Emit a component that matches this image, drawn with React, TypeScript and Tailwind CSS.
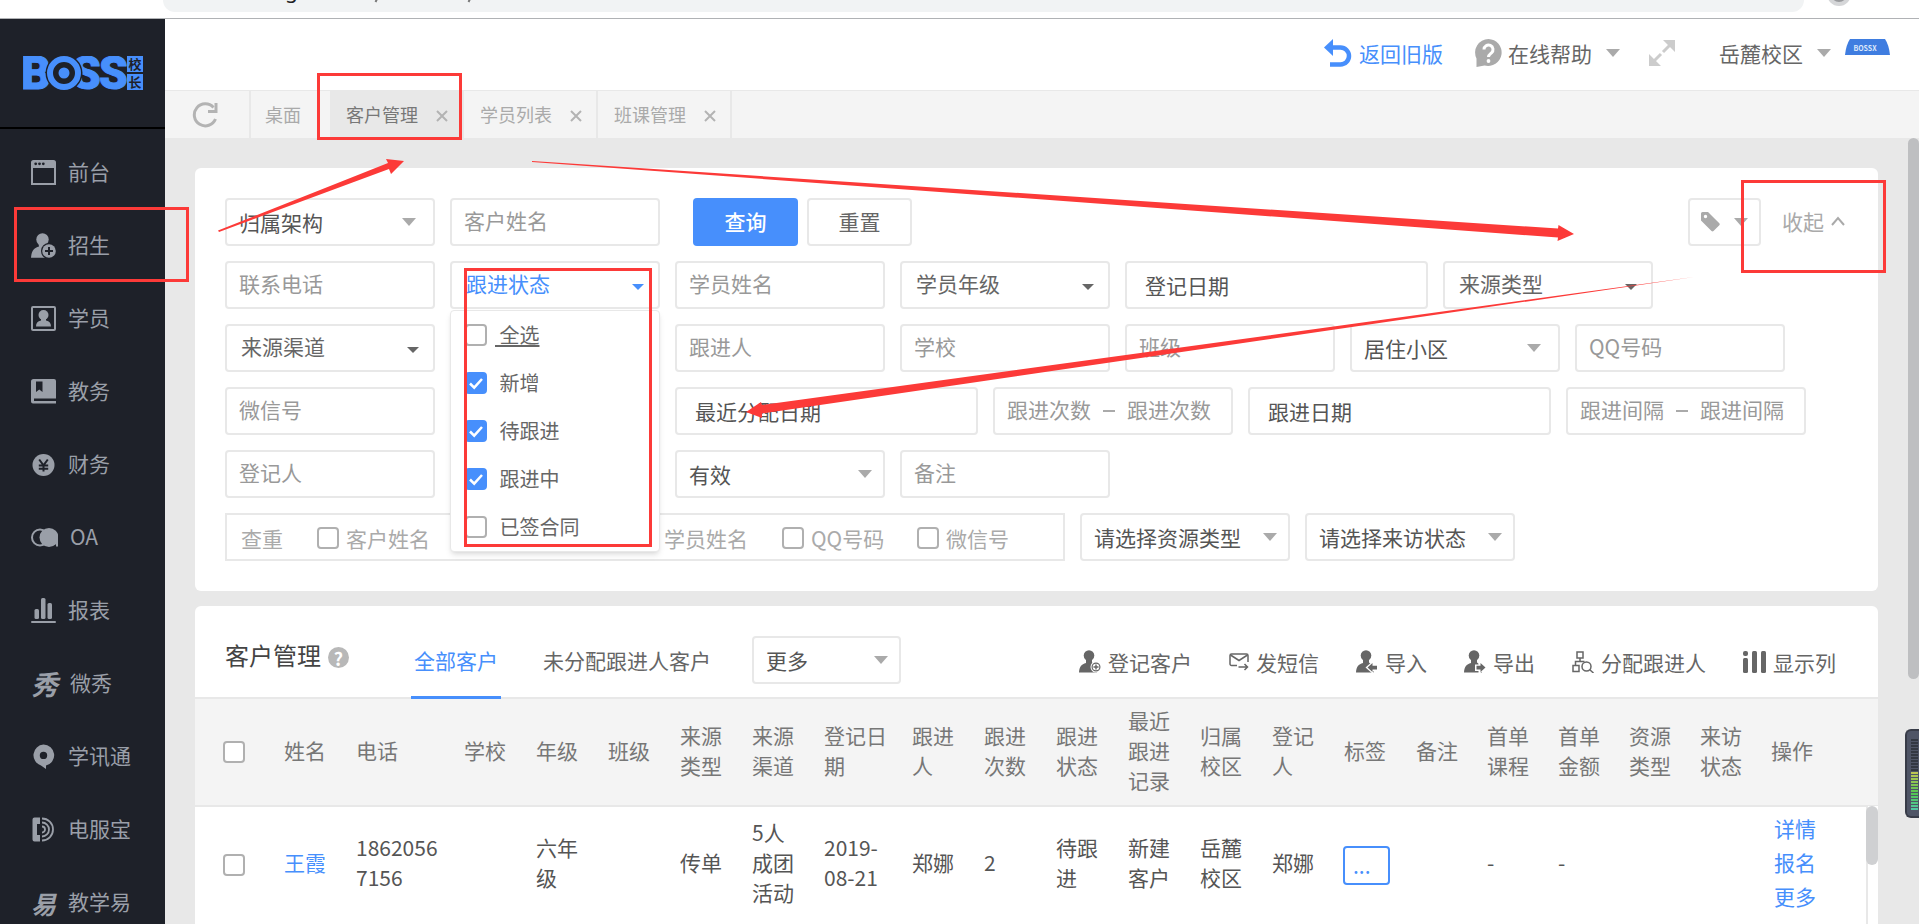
import { useState, type ReactNode } from "react";

// ---------------------------------------------------------------------------
// Data
// ---------------------------------------------------------------------------

type TabItem = { label: string; closable: boolean };

const TABS: TabItem[] = [
  { label: "桌面", closable: false },
  { label: "客户管理", closable: true },
  { label: "学员列表", closable: true },
  { label: "班课管理", closable: true },
];

const FOLLOW_STATES = ["全选", "新增", "待跟进", "跟进中", "已签合同"];

// Column title + width. The last column takes whatever is left.
const COLUMNS: { title: string; width: string }[] = [
  { title: "姓名", width: "w-[72px]" },
  { title: "电话", width: "w-[108px]" },
  { title: "学校", width: "w-[72px]" },
  { title: "年级", width: "w-[72px]" },
  { title: "班级", width: "w-[72px]" },
  { title: "来源类型", width: "w-[72px]" },
  { title: "来源渠道", width: "w-[72px]" },
  { title: "登记日期", width: "w-[88px]" },
  { title: "跟进人", width: "w-[72px]" },
  { title: "跟进次数", width: "w-[72px]" },
  { title: "跟进状态", width: "w-[72px]" },
  { title: "最近跟进记录", width: "w-[72px]" },
  { title: "归属校区", width: "w-[72px]" },
  { title: "登记人", width: "w-[72px]" },
  { title: "标签", width: "w-[72px]" },
  { title: "备注", width: "w-[71px]" },
  { title: "首单课程", width: "w-[71px]" },
  { title: "首单金额", width: "w-[71px]" },
  { title: "资源类型", width: "w-[71px]" },
  { title: "来访状态", width: "w-[71px]" },
  { title: "操作", width: "" },
];

// ---------------------------------------------------------------------------
// Sidebar
// ---------------------------------------------------------------------------

function NavIcon({ children, wide }: { children: ReactNode; wide?: boolean }) {
  return (
    <svg
      viewBox={wide ? "0 0 27 25" : "0 0 25 25"}
      className={wide ? "h-[25px] w-[27px] shrink-0" : "h-[25px] w-[25px] shrink-0"}
      fill="currentColor"
      aria-hidden="true"
    >
      {children}
    </svg>
  );
}

const NAV: { label: string; icon: ReactNode }[] = [
  {
    label: "前台",
    icon: (
      <NavIcon>
        <path
          fillRule="evenodd"
          d="M2.500 0h20a2.500 2.500 0 0 1 2.500 2.500V25H0V2.500A2.500 2.500 0 0 1 2.500 0zM2 8v15h21V8z"
        />
        <circle cx="4.700" cy="3.800" r="1.400" fill="#1e2129" />
        <circle cx="8.500" cy="3.800" r="1.400" fill="#1e2129" />
        <circle cx="12.300" cy="3.800" r="1.400" fill="#1e2129" />
      </NavIcon>
    ),
  },
  {
    label: "招生",
    icon: (
      <NavIcon>
        <circle cx="11.500" cy="6.500" r="6.200" />
        <path d="M7.500 10.500h8L15 14l3 10.800H0C.5 18 3 14.800 8 13.500z" />
        <circle cx="18" cy="18" r="8" fill="#1e2129" />
        <circle cx="18" cy="18" r="6.800" />
        <path d="M18 14v8M14 18h8" stroke="#1e2129" strokeWidth="2" />
      </NavIcon>
    ),
  },
  {
    label: "学员",
    icon: (
      <NavIcon>
        <rect x="1" y="1" width="23" height="23" rx="1" fill="none" stroke="currentColor" strokeWidth="2" />
        <circle cx="12.500" cy="9" r="5" />
        <path d="M10 12h5v2.500c3.500.8 5 2.500 5 6H5c0-3.500 1.500-5.200 5-6z" />
      </NavIcon>
    ),
  },
  {
    label: "教务",
    icon: (
      <NavIcon>
        <path d="M2.500 0H23a2 2 0 0 1 2 2v17.500H3V22h22v2.500H2A2 2 0 0 1 0 22.500v-20A2.500 2.500 0 0 1 2.500 0z" />
        <path d="M5 2.500h6.500V13l-3.200-2.600L5 13z" fill="#1e2129" />
      </NavIcon>
    ),
  },
  {
    label: "财务",
    icon: (
      <NavIcon>
        <circle cx="12.500" cy="13" r="11" />
        <path
          d="M8.200 7.500l4.300 5.800 4.300-5.800M12.500 13v6.500M7.800 13.600h9.400M7.800 16.700h9.400"
          fill="none"
          stroke="#1e2129"
          strokeWidth="2"
        />
      </NavIcon>
    ),
  },
  {
    label: "OA",
    icon: (
      <NavIcon wide>
        <circle cx="9" cy="12.500" r="8" fill="none" stroke="currentColor" strokeWidth="2" />
        <circle cx="18" cy="12.500" r="9.500" />
        <path d="M25 12h2.500v9.500H25z" />
      </NavIcon>
    ),
  },
  {
    label: "报表",
    icon: (
      <NavIcon>
        <rect x="3.500" y="11" width="4.500" height="10" rx="1.500" />
        <rect x="10" y="0" width="4.500" height="21" rx="1.500" />
        <rect x="16.500" y="5" width="4.500" height="16" rx="1.500" />
        <rect x="0" y="23" width="25" height="2" rx="1" />
      </NavIcon>
    ),
  },
  {
    label: "微秀",
    icon: (
      <span className="w-[27px] shrink-0 text-[27px] leading-6 font-bold italic" aria-hidden="true">
        秀
      </span>
    ),
  },
  {
    label: "学讯通",
    icon: (
      <NavIcon>
        <path
          fillRule="evenodd"
          d="M12.500.5a10.700 10.700 0 0 1 2.500 21.100V25l-5-3.600A10.700 10.700 0 0 1 12.500.5zm0 7.200a3.700 3.700 0 1 0 0 7.400 3.700 3.700 0 0 0 0-7.400z"
        />
      </NavIcon>
    ),
  },
  {
    label: "电服宝",
    icon: (
      <NavIcon>
        <path d="M3.500 0.500H9V7H6v11h3v6.500H3.500a2 2 0 0 1-2-2v-20a2 2 0 0 1 2-2z" />
        <g fill="none" stroke="currentColor" strokeWidth="1.800">
          <path d="M11 1.500a11 11 0 0 1 0 22" />
          <path d="M11 5.500a7 7 0 0 1 0 14" />
          <path d="M11 9.500a3 3 0 0 1 0 6" />
        </g>
      </NavIcon>
    ),
  },
  {
    label: "教学易",
    icon: (
      <span className="w-[25px] shrink-0 text-[25px] leading-6 font-bold italic" aria-hidden="true">
        易
      </span>
    ),
  },
];

function Logo() {
  return (
    <svg viewBox="0 0 120 34" className="h-[34px] w-[120px]" fill="#478ffc" role="img" aria-label="BOSS校长">
      <g fontFamily="Roboto, sans-serif" fontWeight="900" fontSize="46" stroke="#478ffc" strokeWidth="1">
        <text x="-2" y="33">B</text>
        <text x="49" y="33">S</text>
        <text x="76" y="33">S</text>
      </g>
      <circle cx="41" cy="17" r="18.500" fill="#1e2129" />
      <circle cx="41" cy="17" r="14" fill="none" stroke="#478ffc" strokeWidth="6" />
      <circle cx="41" cy="17" r="5.500" />
      <rect x="104" y="0" width="16" height="16" />
      <rect x="104" y="18" width="16" height="16" />
      <g fontSize="13" fontWeight="700" fill="#1e2129" textAnchor="middle">
        <text x="112" y="13">校</text>
        <text x="112" y="31">长</text>
      </g>
    </svg>
  );
}

function Sidebar() {
  return (
    <aside className="w-[165px] shrink-0 overflow-hidden bg-[#1e2129] text-[#9a9fa8]">
      <div className="flex h-[110px] items-center border-b-2 border-black pl-[23px]">
        <Logo />
      </div>
      <nav className="pt-[7px]">
        {NAV.map((item) => (
          <a key={item.label} href="#" className="flex h-[73px] items-center gap-3 pl-[31px]">
            {item.icon}
            <span className="pb-1">{item.label}</span>
          </a>
        ))}
      </nav>
    </aside>
  );
}

// ---------------------------------------------------------------------------
// Small controls
// ---------------------------------------------------------------------------

function Caret({ className = "text-[#aaaaaa]", small }: { className?: string; small?: boolean }) {
  return (
    <svg
      viewBox="0 0 14 8"
      className={`${small ? "h-1.5 w-3" : "h-2 w-3.5"} shrink-0 ${className}`}
      preserveAspectRatio="none"
      fill="currentColor"
      aria-hidden="true"
    >
      <path d="M0 0h14L7 8z" />
    </svg>
  );
}

function TextField({ label }: { label: string }) {
  return (
    <input
      type="text"
      aria-label={label}
      placeholder={label}
      className="h-12 w-[210px] rounded border-2 border-[#e8e8e8] bg-white px-3 pb-1 text-[#555555] outline-none placeholder:text-[#999999]"
    />
  );
}

function DateField({ label }: { label: string }) {
  return (
    <input
      type="text"
      aria-label={label}
      placeholder={label}
      className="h-12 w-[303px] rounded border-2 border-[#e8e8e8] bg-white px-[18px] text-[#555555] outline-none placeholder:text-[#555555]"
    />
  );
}

type SelectFieldProps = { label: string; width?: string; caret?: string };

function SelectField({ label, width = "w-[210px]", caret = "right-[13px]" }: SelectFieldProps) {
  return (
    <div className={`relative ${width}`}>
      <select
        aria-label={label}
        className="block h-12 w-full appearance-none rounded border-2 border-[#e8e8e8] bg-white px-3 text-[#555555] outline-none"
      >
        <option>{label}</option>
      </select>
      <span className={`pointer-events-none absolute inset-y-0 flex items-center ${caret}`}>
        <Caret />
      </span>
    </div>
  );
}

// Opens a multi-choice list, so it is a button and not a <select>.
function MultiField({ label, active, onClick }: { label: string; active?: boolean; onClick?: () => void }) {
  return (
    <button
      type="button"
      onClick={onClick}
      className={`flex h-12 w-[210px] items-center justify-between rounded border-2 border-[#e8e8e8] bg-white px-3.5 ${
        active ? "text-[#478ffc]" : "text-[#666666]"
      }`}
    >
      <span className="pb-1">{label}</span>
      <Caret small className={`mt-1 ${active ? "text-[#478ffc]" : "text-[#666666]"}`} />
    </button>
  );
}

function RangeField({ label }: { label: string }) {
  return (
    <div className="flex h-12 w-[240px] items-center gap-3 rounded border-2 border-[#e8e8e8] bg-white pl-3 text-[#999999]">
      <input
        type="text"
        aria-label={`${label} 起`}
        placeholder={label}
        className="w-[84px] pb-1 outline-none placeholder:text-[#999999]"
      />
      <span className="h-0.5 w-3 bg-[#aaaaaa]" />
      <input
        type="text"
        aria-label={`${label} 止`}
        placeholder={label}
        className="w-[84px] pb-1 outline-none placeholder:text-[#999999]"
      />
    </div>
  );
}

function CheckBox({ label, checked, onChange }: { label?: string; checked?: boolean; onChange?: () => void }) {
  return (
    <span className="relative flex h-[22px] w-[22px] shrink-0">
      <input
        type="checkbox"
        aria-label={label}
        checked={checked}
        onChange={onChange}
        className="peer h-[22px] w-[22px] appearance-none rounded border-2 border-[#b0b0b0] bg-white checked:border-[#478ffc] checked:bg-[#478ffc]"
      />
      <svg
        viewBox="0 0 22 22"
        className="pointer-events-none absolute inset-0 hidden peer-checked:block"
        fill="none"
        stroke="#ffffff"
        strokeWidth="2.500"
        aria-hidden="true"
      >
        <path d="M5 11.500l4.200 4.200L17 7" />
      </svg>
    </span>
  );
}

// ---------------------------------------------------------------------------
// Header and page tabs
// ---------------------------------------------------------------------------

// Lower edge of the browser's address bar.
function BrowserEdge() {
  return (
    <div className="flex h-[19px] shrink-0 items-start border-b border-[#b0b2b5] bg-white pr-[68px] pl-[163px]">
      <div className="h-3 flex-1 overflow-hidden rounded-b-full bg-[#f1f3f4]">
        <svg className="h-3 w-full" fontFamily="Noto Sans, sans-serif" fontSize="21" fill="#202124" aria-hidden="true">
          <text x="122" y="-2">g</text>
          <g stroke="#777777" strokeWidth="2">
            <path d="M214 -1l-1.500 3M307 -1l-1.500 3" />
          </g>
        </svg>
      </div>
      <svg viewBox="0 0 24 6" className="ml-[23px] h-1.5 w-6" aria-hidden="true">
        <circle cx="12" cy="-6" r="12" fill="#d5d6d8" />
        <circle cx="12" cy="-6" r="8" fill="#9a9b9e" />
      </svg>
    </div>
  );
}

function TopBar() {
  return (
    <header className="flex h-[71px] shrink-0 items-center justify-end bg-white pr-[29px] pb-[3px] text-[#666666]">
      <a href="#" className="flex items-center gap-[7px] text-[#478ffc]">
        <svg viewBox="0 0 28 28" className="h-7 w-7" aria-hidden="true">
          <path d="M0 8.500L9 0v17z" fill="currentColor" />
          <path d="M7 8.500h9.500a8.500 8.500 0 0 1 0 17H6" fill="none" stroke="currentColor" strokeWidth="4.500" />
        </svg>
        返回旧版
      </a>
      <button type="button" className="ml-8 flex items-center">
        <svg viewBox="0 0 27 28" className="mr-1.5 h-7 w-[27px]" aria-hidden="true">
          <path d="M13.500 0a13.500 13.500 0 1 1-4 26.500L1.500 28V19.500A13.500 13.500 0 0 1 13.500 0z" fill="#aaaaaa" />
          <path
            d="M9 10.500a4.500 4.500 0 1 1 7.500 3.400c-1.800 1.500-3 2-3 4.100"
            fill="none"
            stroke="#ffffff"
            strokeWidth="3"
          />
          <circle cx="13.500" cy="22" r="1.900" fill="#ffffff" />
        </svg>
        在线帮助
        <span className="ml-3.5">
          <Caret />
        </span>
      </button>
      <button type="button" aria-label="全屏" className="ml-[29px]">
        <svg viewBox="0 0 26 26" className="h-[26px] w-[26px]" aria-hidden="true">
          <path d="M14 0h12v12zM0 14v12h12z" fill="#cccccc" />
          <path d="M22 4l-8 8M12 14l-8 8" stroke="#cccccc" strokeWidth="3" />
        </svg>
      </button>
      <button type="button" className="ml-11 flex items-center gap-3.5">
        岳麓校区
        <Caret />
      </button>
      <svg viewBox="0 0 45 16" className="mt-5 ml-3.5 h-4 w-[45px] self-start" aria-hidden="true">
        <path d="M5 0h35q4 6 5 16H0Q1 6 5 0z" fill="#3f7de0" />
        <text x="20" y="12" fontSize="7" fontWeight="700" fill="#dce8fb" textAnchor="middle">
          BOSSX
        </text>
      </svg>
    </header>
  );
}

function PageTabs() {
  return (
    <div className="flex h-12 shrink-0 border-t border-[#e8e8e8] bg-[#f4f4f4] text-lg text-[#aaaaaa]">
      <button
        type="button"
        aria-label="刷新"
        className="flex w-[86px] items-center border-r-2 border-[#e8e8e8] pl-[27px]"
      >
        <svg viewBox="0 0 26 26" className="h-[26px] w-[26px]" fill="none" stroke="#b3b3b3" strokeWidth="3" aria-hidden="true">
          <path d="M23.500 17A11 11 0 1 1 21.500 5.500" />
          <path d="M24 1v8.500h-8" />
        </svg>
      </button>
      {TABS.map((tab) =>
        tab.closable ? (
          <div
            key={tab.label}
            className={`flex items-center gap-[18px] border-r-2 border-[#e8e8e8] pr-3.5 pb-0.5 pl-4 ${
              tab.label === "客户管理" ? "bg-[#e8e8e8] text-[#777777]" : ""
            }`}
          >
            <a href="#">{tab.label}</a>
            <button type="button" aria-label={`关闭${tab.label}`}>
              <svg viewBox="0 0 12 12" className="mt-1 h-3 w-3" stroke="#b3b3b3" strokeWidth="2" aria-hidden="true">
                <path d="M1 1l10 10M11 1L1 11" />
              </svg>
            </button>
          </div>
        ) : (
          <a key={tab.label} href="#" className="flex items-center pr-[29px] pb-0.5 pl-3.5">
            {tab.label}
          </a>
        ),
      )}
    </div>
  );
}

// ---------------------------------------------------------------------------
// Filters
// ---------------------------------------------------------------------------

function FollowStateField() {
  const [open, setOpen] = useState(true);
  const [picked, setPicked] = useState(["新增", "待跟进", "跟进中"]);

  function toggle(state: string) {
    setPicked((prev) => (prev.includes(state) ? prev.filter((s) => s !== state) : [...prev, state]));
  }

  return (
    <div className="relative">
      <MultiField label="跟进状态" active onClick={() => setOpen(!open)} />
      {open && (
        <div className="absolute top-[49px] left-0 z-10 w-[210px] rounded border border-[#e8e8e8] bg-white shadow-md">
          {FOLLOW_STATES.map((state) => (
            <label key={state} className="flex h-12 items-center gap-2 pl-3.5 text-xl text-[#666666]">
              <CheckBox checked={picked.includes(state)} onChange={() => toggle(state)} />
              <span className={`whitespace-pre ${state === "全选" ? "underline underline-offset-2" : ""}`}>
                {" " + state}
              </span>
            </label>
          ))}
        </div>
      )}
    </div>
  );
}

function DuplicateCheck() {
  return (
    <fieldset className="flex h-12 w-[840px] items-center border-2 border-[#e8e8e8] pt-0.5 pl-3.5 text-[#aaaaaa]">
      <span className="w-[76px]">查重</span>
      <label className="flex w-[147px] items-center gap-[7px]">
        <CheckBox />
        客户姓名
      </label>
      <span className="w-[171px]" />
      <label className="flex w-[147px] items-center gap-[7px]">
        <CheckBox />
        学员姓名
      </label>
      <label className="flex w-[135px] items-center gap-[7px]">
        <CheckBox />
        QQ号码
      </label>
      <label className="flex items-center gap-[7px]">
        <CheckBox />
        微信号
      </label>
    </fieldset>
  );
}

function Filters() {
  return (
    <section className="flex flex-col gap-[15px] rounded-md bg-white p-[30px]">
      <div className="flex gap-[15px]">
        <SelectField label="归属架构" caret="right-[19px]" />
        <TextField label="客户姓名" />
        <div className="ml-[18px] flex gap-[9px]">
          <button type="button" className="h-12 w-[105px] rounded bg-[#478ffc] pb-0.5 font-medium text-white">
            查询
          </button>
          <button type="button" className="h-12 w-[105px] rounded border-2 border-[#e8e8e8] pb-0.5 text-[#666666]">
            重置
          </button>
        </div>
        <div className="ml-auto flex items-center gap-[21px] text-[#aaaaaa]">
          <button
            type="button"
            aria-label="标签"
            className="flex h-12 w-[73px] items-center justify-between rounded border-2 border-[#e8e8e8] px-[11px]"
          >
            <svg viewBox="0 0 19 20" className="h-5 w-[19px]" aria-hidden="true">
              <path
                fillRule="evenodd"
                fill="#aaaaaa"
                d="M1.500 0H7l11.300 11.300a1.500 1.500 0 0 1 0 2L12.500 19a1.500 1.500 0 0 1-2 0L0 8.500V1.500A1.500 1.500 0 0 1 1.500 0zM4.500 2.800a1.700 1.700 0 1 0 0 3.400 1.700 1.700 0 0 0 0-3.400z"
              />
            </svg>
            <Caret />
          </button>
          <button type="button" className="flex items-center gap-[7px] pr-[3px] pb-0.5">
            收起
            <svg viewBox="0 0 14 10" className="h-2.5 w-3.5" fill="none" stroke="#aaaaaa" strokeWidth="2" aria-hidden="true">
              <path d="M1 9l6-7 6 7" />
            </svg>
          </button>
        </div>
      </div>

      <div className="flex gap-[15px]">
        <TextField label="联系电话" />
        <FollowStateField />
        <TextField label="学员姓名" />
        <MultiField label="学员年级" />
        <DateField label="登记日期" />
        <MultiField label="来源类型" />
      </div>

      <div className="flex gap-[15px]">
        <MultiField label="来源渠道" />
        <div className="w-[210px]" />
        <TextField label="跟进人" />
        <TextField label="学校" />
        <TextField label="班级" />
        <SelectField label="居住小区" caret="right-[19px]" />
        <TextField label="QQ号码" />
      </div>

      <div className="flex gap-[15px]">
        <TextField label="微信号" />
        <div className="w-[210px]" />
        <DateField label="最近分配日期" />
        <RangeField label="跟进次数" />
        <DateField label="跟进日期" />
        <RangeField label="跟进间隔" />
      </div>

      <div className="flex gap-[15px]">
        <TextField label="登记人" />
        <div className="w-[210px]" />
        <SelectField label="有效" />
        <TextField label="备注" />
      </div>

      <div className="flex gap-[15px]">
        <DuplicateCheck />
        <SelectField label="请选择资源类型" />
        <SelectField label="请选择来访状态" />
      </div>
    </section>
  );
}

// ---------------------------------------------------------------------------
// Customer table
// ---------------------------------------------------------------------------

function PersonShape() {
  return (
    <>
      <circle cx="10" cy="5.500" r="5.300" />
      <path d="M7 9h6v3.500l5 3.500v6.500H0C.3 16.500 2.500 14.500 7 13z" />
    </>
  );
}

const ACTIONS: { label: string; icon: ReactNode }[] = [
  {
    label: "登记客户",
    icon: (
      <svg viewBox="0 0 22 23" className="h-[23px] w-[22px]" fill="currentColor" aria-hidden="true">
        <PersonShape />
        <circle cx="17" cy="17" r="5.500" fill="#ffffff" />
        <circle cx="17" cy="17" r="3.900" fill="none" stroke="currentColor" strokeWidth="1.200" />
        <path d="M17 14.500v5M14.500 17h5" stroke="currentColor" strokeWidth="1.400" />
      </svg>
    ),
  },
  {
    label: "发短信",
    icon: (
      <svg
        viewBox="0 0 20 18"
        className="h-[18px] w-5"
        fill="none"
        stroke="currentColor"
        strokeWidth="1.500"
        aria-hidden="true"
      >
        <path d="M8 12.500H2.500A1.500 1.500 0 0 1 1 11V2.500A1.500 1.500 0 0 1 2.500 1h15A1.500 1.500 0 0 1 19 2.500V9" />
        <path d="M1.500 2l8.500 5.500L18.500 2M9.500 14h9M15.500 11l3 3-3 3" />
      </svg>
    ),
  },
  {
    label: "导入",
    icon: (
      <svg viewBox="0 0 22 23" className="h-[23px] w-[22px]" fill="currentColor" aria-hidden="true">
        <PersonShape />
        <path d="M9.500 17.500l8-7v3.500H23v7h-5.500v3.500z" fill="#ffffff" />
        <path d="M11.500 17.500l5-4.500v2.800H21v3.600h-4.500V22z" />
      </svg>
    ),
  },
  {
    label: "导出",
    icon: (
      <svg viewBox="0 0 22 23" className="h-[23px] w-[22px]" fill="currentColor" aria-hidden="true">
        <PersonShape />
        <path d="M22.500 17.500l-8-7v4H11v6.500h3.500v3.500z" fill="#ffffff" />
        <path d="M21.500 17.500l-5-4.500v2.800H12.500v3.600h4V22z" />
      </svg>
    ),
  },
  {
    label: "分配跟进人",
    icon: (
      <svg
        viewBox="0 0 22 22"
        className="h-[22px] w-[22px]"
        fill="none"
        stroke="currentColor"
        strokeWidth="1.500"
        aria-hidden="true"
      >
        <path d="M5 1h6v6H5zM1 14.500h6v6H1zM8 7v3.500M3.500 14.500V10.500h9" />
        <circle cx="14.500" cy="15.500" r="4.500" />
        <path d="M17.800 18.800L21.500 22" />
      </svg>
    ),
  },
  {
    label: "显示列",
    icon: (
      <svg viewBox="0 0 23 22" className="h-[22px] w-[23px]" fill="currentColor" aria-hidden="true">
        <rect x="0" y="0" width="5" height="5" rx="2" />
        <rect x="0" y="7" width="5" height="15" rx="1.500" />
        <rect x="9" y="0" width="5" height="22" rx="1.500" />
        <rect x="18" y="0" width="5" height="22" rx="1.500" />
      </svg>
    ),
  },
];

function CustomerTable() {
  const link = "text-[#478ffc]";

  return (
    <section className="relative rounded-md bg-white">
      <div className="flex h-[93px] items-center border-b-2 border-[#e8e8e8] pr-[42px] pl-[30px] text-[#666666]">
        <h2 className="pt-1.5 text-2xl text-[#444444]">客户管理</h2>
        <span className="mt-3 ml-[7px] flex h-[21px] w-[21px] items-center justify-center rounded-full bg-[#b8b8b8] text-lg font-bold text-white">
          ?
        </span>
        <a
          href="#"
          className="-mb-0.5 ml-[62px] flex h-[93px] w-[90px] items-center justify-center border-b-3 border-[#478ffc] pt-5 text-[#478ffc]"
        >
          <span className="pb-0.5">全部客户</span>
        </a>
        <a href="#" className="ml-[42px] pt-4">
          未分配跟进人客户
        </a>
        <div className="ml-[41px] pt-4">
          <SelectField label="更多" width="w-[149px]" />
        </div>
        <div className="ml-auto flex gap-[37px] pt-5">
          {ACTIONS.map((action) => (
            <button key={action.label} type="button" className="flex items-center gap-[7px]">
              {action.icon}
              {action.label}
            </button>
          ))}
        </div>
      </div>

      <table className="w-full table-fixed text-left leading-[30px] text-[#555555]">
        <thead>
          <tr className="h-[107px] border-b-2 border-[#e8e8e8] bg-[#f4f4f4] text-[#777777]">
            <th className="w-[74px] pl-7">
              <CheckBox label="全选" />
            </th>
            {COLUMNS.map((col) => (
              <th key={col.title} className={`${col.width} pr-1.5 pb-1 pl-[15px] font-normal`}>
                {col.title}
              </th>
            ))}
          </tr>
        </thead>
        <tbody>
          <tr className="h-[122px] border-b-2 border-[#e8e8e8] *:pr-1.5 *:pb-2.5 *:pl-[15px]">
            <td className="!pb-1 !pl-7">
              <CheckBox label="选择王霞" />
            </td>
            <td>
              <a href="#" className={link}>
                王霞
              </a>
            </td>
            <td className="break-all">18620567156</td>
            <td />
            <td>六年级</td>
            <td />
            <td>传单</td>
            <td>5人成团活动</td>
            <td>2019-08-21</td>
            <td>郑娜</td>
            <td>2</td>
            <td>待跟进</td>
            <td>新建客户</td>
            <td>岳麓校区</td>
            <td>郑娜</td>
            <td className="!pb-1 !pl-3.5">
              <button
                type="button"
                aria-label="标签"
                className="flex h-[39px] w-[47px] items-center rounded border-2 border-[#478ffc] pl-2 text-[#478ffc]"
              >
                ...
              </button>
            </td>
            <td />
            <td>-</td>
            <td>-</td>
            <td />
            <td />
            <td>
              <div className={`flex flex-col items-start pl-[3px] leading-[34px] ${link}`}>
                <a href="#">详情</a>
                <a href="#">报名</a>
                <a href="#">更多</a>
              </div>
            </td>
          </tr>
        </tbody>
      </table>

      {/* scrollbar of the table body */}
      <div className="absolute top-[200px] right-0 bottom-0 w-3 border-l-2 border-[#e8e8e8] bg-white">
        <div className="-ml-0.5 h-[59px] w-3 rounded-md bg-[#cfd0d2]" />
      </div>
    </section>
  );
}

// ---------------------------------------------------------------------------
// Overlays
// ---------------------------------------------------------------------------

// 24 bars: the upper ones are off, the rest run from yellow to teal.
function LevelMeter() {
  const bars = Array.from({ length: 24 }, (_, i) => i);
  return (
    <div className="absolute top-[729px] right-0 flex h-[89px] w-3.5 flex-col gap-px rounded-l-md border-2 border-r-0 border-[#383c48] bg-[#4f5566] pt-2 pl-1">
      {bars.map((i) => (
        <span
          key={i}
          className="h-0.5 w-[7px]"
          style={{ backgroundColor: i < 11 ? "#333842" : `hsl(${65 + (i - 11) * 8}, 50%, 55%)` }}
        />
      ))}
    </div>
  );
}

function Annotations() {
  return (
    <svg className="pointer-events-none absolute inset-0 z-20 h-full w-full" aria-hidden="true">
      <g fill="none" stroke="#fc3a38" strokeWidth="3">
        <rect x="318.500" y="74.500" width="142" height="64" />
        <rect x="15.500" y="208.500" width="172" height="72" />
        <rect x="1742.500" y="181.500" width="142" height="90" />
        <rect x="465.500" y="269.500" width="185" height="276" />
      </g>
      <g fill="#fc3a38">
        <path d="M218 230.500L388 163l-2-4 18 2-13 13-2-5L219 232z" />
        <path d="M532 161L1558 228.500l.5-3.500 15.500 9-16.500 7 .5-3.500L532 162z" />
        <path d="M1694 277L762 405l-1-3-15 10 16 6v-4.500z" />
      </g>
    </svg>
  );
}

export default function App() {
  return (
    <div className="relative flex h-screen flex-col overflow-hidden bg-[#e8e8e8] font-['Noto_Sans_CJK_SC',sans-serif] text-[21px] leading-8">
      <BrowserEdge />
      <div className="flex min-h-0 flex-1">
        <Sidebar />
        <div className="flex min-w-0 flex-1 flex-col">
          <TopBar />
          <PageTabs />
          <div className="flex min-h-0 flex-1">
            <main className="flex min-w-0 flex-1 flex-col gap-[15px] overflow-hidden px-[30px] pt-[30px]">
              <Filters />
              <CustomerTable />
            </main>
            <div className="w-[11px] shrink-0">
              <div className="h-[541px] rounded-md bg-[#bebfc1]" />
            </div>
          </div>
        </div>
      </div>
      <LevelMeter />
      <Annotations />
    </div>
  );
}
